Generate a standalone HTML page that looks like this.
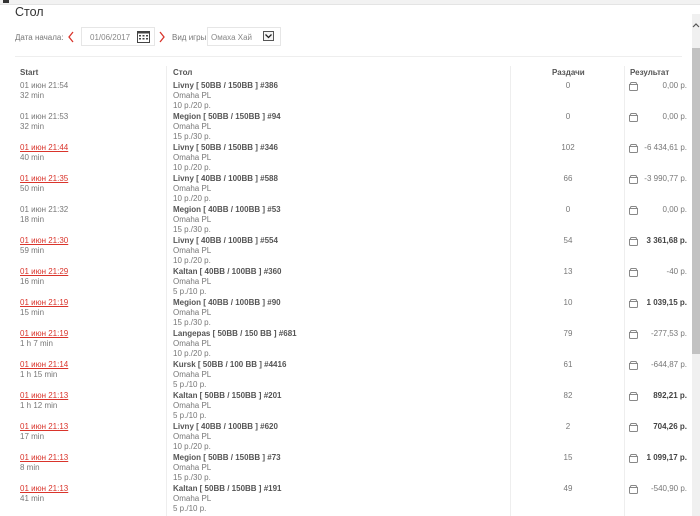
<!DOCTYPE html>
<html><head><meta charset="utf-8"><style>
*{margin:0;padding:0;box-sizing:border-box}
body{width:700px;height:516px;overflow:hidden;background:#fff;font-family:"Liberation Sans",Arial,sans-serif;color:#777;font-size:8px;position:relative}
.top{position:absolute;left:0;top:0;width:700px;height:5px;background:#f2f2f2;border-bottom:1px solid #e4e4e4}
.top:before{content:"";position:absolute;left:3px;top:0;width:6px;height:3px;background:#333}
.a{position:absolute;white-space:nowrap}
.t{left:15px;top:5px;font-size:12.5px;color:#333}
.lbl{top:33px;font-size:8px;color:#777}
.date{left:81px;top:27px;width:74px;height:19px;border:1px solid #e6e6e6}
.sel{left:207px;top:27px;width:74px;height:19px;border:1px solid #e6e6e6}
.hl{left:15px;top:56px;width:667px;height:1px;background:#eee}
.vl{top:66px;width:1px;height:450px;background:#eee}
.h{top:68px;font-size:8px;font-weight:bold;color:#555}
.r{position:absolute;left:0;width:690px;line-height:10px;height:31px}
.r div,.r svg{position:absolute;white-space:nowrap}
.s{left:20px}
.s a{color:#d9342b;text-decoration:underline}
.g{left:173px}
.g b{color:#555}
.n{left:540px;width:56px;text-align:center}
.ic{left:628px;top:0px}
.v{left:640px;width:47px;text-align:right}
.v b{color:#444}
.sb{position:absolute;left:692px;top:14px;width:8px;height:502px;background:#f0f0f0}
.th{position:absolute;left:692px;top:48px;width:8px;height:306px;background:#c2c2c2}
</style></head><body>
<div class="top"></div>
<div class="a t">Стол</div>
<div class="a lbl" style="left:15px">Дата начала:</div>
<svg class="a" style="left:67px;top:31px" width="8" height="12"><path d="M6 1L2 6L6 11" stroke="#d9342b" stroke-width="1.3" fill="none"/></svg>
<div class="a date"></div>
<div class="a lbl" style="left:90px;color:#888">01/06/2017</div>
<svg class="a" style="left:137px;top:30px" width="13" height="13"><rect x="0.5" y="1.5" width="12" height="11" fill="#fff" stroke="#444"/><rect x="0.5" y="1.5" width="12" height="2" fill="#444"/><g fill="#444"><rect x="2" y="5" width="2" height="1.5"/><rect x="5.5" y="5" width="2" height="1.5"/><rect x="9" y="5" width="2" height="1.5"/><rect x="2" y="8" width="2" height="1.5"/><rect x="5.5" y="8" width="2" height="1.5"/><rect x="9" y="8" width="2" height="1.5"/></g></svg>
<svg class="a" style="left:158px;top:31px" width="8" height="12"><path d="M2 1L6 6L2 11" stroke="#d9342b" stroke-width="1.3" fill="none"/></svg>
<div class="a lbl" style="left:172px">Вид игры:</div>
<div class="a sel"></div>
<div class="a lbl" style="left:211px;color:#888">Омаха Хай</div>
<svg class="a" style="left:263px;top:31px" width="11" height="10"><rect x="0.5" y="0.5" width="10" height="9" fill="#f4f4f4" stroke="#555"/><path d="M2.5 3.5L5.5 6.5L8.5 3.5" stroke="#222" stroke-width="1.3" fill="none"/></svg>
<div class="a hl"></div>
<div class="a vl" style="left:166px"></div>
<div class="a vl" style="left:510px"></div>
<div class="a vl" style="left:624px"></div>
<div class="a h" style="left:20px">Start</div>
<div class="a h" style="left:173px">Стол</div>
<div class="a h" style="left:552px">Раздачи</div>
<div class="a h" style="left:630px">Результат</div>

<svg width="0" height="0" style="position:absolute"><defs><symbol id="w" viewBox="0 0 11 10"><path d="M1.5 3.5H9.5V8.5Q9.5 9.5 8.5 9.5H2.5Q1.5 9.5 1.5 8.5Z M2 3.5L3 1.5H8L9 3.5" stroke="#888" fill="none"/></symbol></defs></svg>

<div class="r" style="top:81px"><div class="s">01 июн 21:54<br>32 min</div><div class="g"><b>Livny [ 50BB / 150BB ] #386</b><br>Omaha PL<br>10 р./20 р.</div><div class="n">0</div><svg class="ic" width="11" height="10"><use href="#w"/></svg><div class="v">0,00 р.</div></div>
<div class="r" style="top:112px"><div class="s">01 июн 21:53<br>32 min</div><div class="g"><b>Megion [ 50BB / 150BB ] #94</b><br>Omaha PL<br>15 р./30 р.</div><div class="n">0</div><svg class="ic" width="11" height="10"><use href="#w"/></svg><div class="v">0,00 р.</div></div>
<div class="r" style="top:143px"><div class="s"><a>01 июн 21:44</a><br>40 min</div><div class="g"><b>Livny [ 50BB / 150BB ] #346</b><br>Omaha PL<br>10 р./20 р.</div><div class="n">102</div><svg class="ic" width="11" height="10"><use href="#w"/></svg><div class="v">-6 434,61 р.</div></div>
<div class="r" style="top:174px"><div class="s"><a>01 июн 21:35</a><br>50 min</div><div class="g"><b>Livny [ 40BB / 100BB ] #588</b><br>Omaha PL<br>10 р./20 р.</div><div class="n">66</div><svg class="ic" width="11" height="10"><use href="#w"/></svg><div class="v">-3 990,77 р.</div></div>
<div class="r" style="top:205px"><div class="s">01 июн 21:32<br>18 min</div><div class="g"><b>Megion [ 40BB / 100BB ] #53</b><br>Omaha PL<br>15 р./30 р.</div><div class="n">0</div><svg class="ic" width="11" height="10"><use href="#w"/></svg><div class="v">0,00 р.</div></div>
<div class="r" style="top:236px"><div class="s"><a>01 июн 21:30</a><br>59 min</div><div class="g"><b>Livny [ 40BB / 100BB ] #554</b><br>Omaha PL<br>10 р./20 р.</div><div class="n">54</div><svg class="ic" width="11" height="10"><use href="#w"/></svg><div class="v"><b>3 361,68 р.</b></div></div>
<div class="r" style="top:267px"><div class="s"><a>01 июн 21:29</a><br>16 min</div><div class="g"><b>Kaltan [ 40BB / 100BB ] #360</b><br>Omaha PL<br>5 р./10 р.</div><div class="n">13</div><svg class="ic" width="11" height="10"><use href="#w"/></svg><div class="v">-40 р.</div></div>
<div class="r" style="top:298px"><div class="s"><a>01 июн 21:19</a><br>15 min</div><div class="g"><b>Megion [ 40BB / 100BB ] #90</b><br>Omaha PL<br>15 р./30 р.</div><div class="n">10</div><svg class="ic" width="11" height="10"><use href="#w"/></svg><div class="v"><b>1 039,15 р.</b></div></div>
<div class="r" style="top:329px"><div class="s"><a>01 июн 21:19</a><br>1 h 7 min</div><div class="g"><b>Langepas [ 50BB / 150 BB ] #681</b><br>Omaha PL<br>10 р./20 р.</div><div class="n">79</div><svg class="ic" width="11" height="10"><use href="#w"/></svg><div class="v">-277,53 р.</div></div>
<div class="r" style="top:360px"><div class="s"><a>01 июн 21:14</a><br>1 h 15 min</div><div class="g"><b>Kursk [ 50BB / 100 BB ] #4416</b><br>Omaha PL<br>5 р./10 р.</div><div class="n">61</div><svg class="ic" width="11" height="10"><use href="#w"/></svg><div class="v">-644,87 р.</div></div>
<div class="r" style="top:391px"><div class="s"><a>01 июн 21:13</a><br>1 h 12 min</div><div class="g"><b>Kaltan [ 50BB / 150BB ] #201</b><br>Omaha PL<br>5 р./10 р.</div><div class="n">82</div><svg class="ic" width="11" height="10"><use href="#w"/></svg><div class="v"><b>892,21 р.</b></div></div>
<div class="r" style="top:422px"><div class="s"><a>01 июн 21:13</a><br>17 min</div><div class="g"><b>Livny [ 40BB / 100BB ] #620</b><br>Omaha PL<br>10 р./20 р.</div><div class="n">2</div><svg class="ic" width="11" height="10"><use href="#w"/></svg><div class="v"><b>704,26 р.</b></div></div>
<div class="r" style="top:453px"><div class="s"><a>01 июн 21:13</a><br>8 min</div><div class="g"><b>Megion [ 50BB / 150BB ] #73</b><br>Omaha PL<br>15 р./30 р.</div><div class="n">15</div><svg class="ic" width="11" height="10"><use href="#w"/></svg><div class="v"><b>1 099,17 р.</b></div></div>
<div class="r" style="top:484px"><div class="s"><a>01 июн 21:13</a><br>41 min</div><div class="g"><b>Kaltan [ 50BB / 150BB ] #191</b><br>Omaha PL<br>5 р./10 р.</div><div class="n">49</div><svg class="ic" width="11" height="10"><use href="#w"/></svg><div class="v">-540,90 р.</div></div>

<div class="sb"></div>
<div class="th"></div>
<svg class="a" style="left:692px;top:22px" width="8" height="6"><path d="M1 5L4 2L7 5" stroke="#555" stroke-width="1.2" fill="none"/></svg>
</body></html>
